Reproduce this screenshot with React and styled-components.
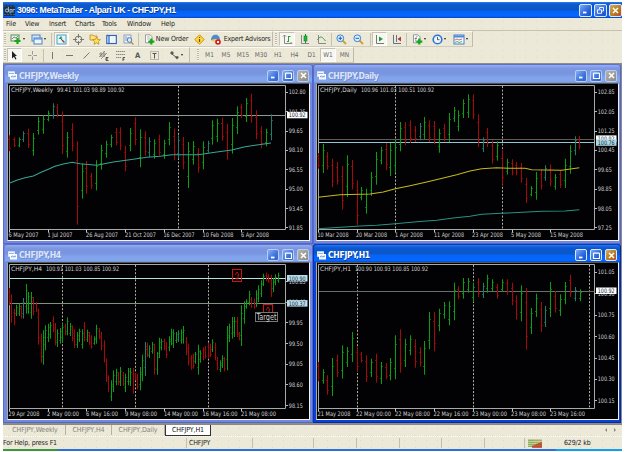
import React from 'react';
import styled, { createGlobalStyle, css } from 'styled-components';

const Global = createGlobalStyle`
  html, body { margin: 0; background: #fff; }
  * { box-sizing: border-box; }
  svg { display: block; flex: none; }
`;

const speckle = css`
  background-color: #ece9d8;
  background-image: radial-gradient(circle, #e6dab4 0.5px, transparent 0.9px);
  background-size: 11px 7px;
`;

const Frame = styled.div`
  width: 619px;
  height: 452px;
  margin-left: 3px;
  padding-top: 2px;
  display: flex;
  flex-direction: column;
  overflow: hidden;
  font-family: 'DejaVu Sans Condensed', 'Noto Sans', sans-serif;
  font-size: 7px;
  color: #222;
  white-space: nowrap;
  cursor: default;
`;

const AppTitle = styled.header`
  flex: none;
  height: 16px;
  display: flex;
  align-items: center;
  padding-left: 1px;
  gap: 2px;
  background: linear-gradient(#2b7fee 0, #0a5bd0 12%, #0c55c4 48%, #0563f5 60%, #0667ff 88%, #0342c0 100%);
`;

const TitleText = styled.h1`
  flex: 1;
  margin: 0;
  font: bold 8.6px 'DejaVu Sans Condensed', 'Noto Sans', sans-serif;
  letter-spacing: ${p => p.$spacing || 0}px;
  color: ${p => (p.$dim ? '#dbe4f8' : '#fff')};
  text-shadow: 0.6px 0.6px 0 ${p => (p.$dim ? '#6f88d0' : '#08348c')};
`;

const AppName = styled(TitleText)`
  font: bold 8.8px 'Liberation Sans', Arial, sans-serif;
`;

const ButtonSet = styled.div`
  display: flex;
  gap: ${p => (p.$large ? 2 : 3)}px;
`;

const buttonTone = {
  blue: 'linear-gradient(135deg, #7ba7f5, #2a66dc 60%, #1c50c0)',
  soft: 'linear-gradient(135deg, #86aef4, #3c73dc 60%, #3263cc)',
  gold: 'linear-gradient(135deg, #d8a860, #b88324 50%, #c44818)',
  grey: 'linear-gradient(135deg, #b4b2aa, #8b8b86)',
};

const CaptionButton = styled.button`
  width: ${p => (p.$large ? 13 : 12)}px;
  height: ${p => (p.$large ? 13 : 12)}px;
  padding: 0;
  display: grid;
  place-items: center;
  border: 1px solid ${p => (p.$tone === 'soft' || p.$tone === 'grey' ? '#b9cdf4' : '#dce8ff')};
  border-radius: 2px;
  background: ${p => buttonTone[p.$tone]};
`;

const MenuBar = styled.nav`
  flex: none;
  height: 13px;
  display: flex;
  align-items: center;
  padding-left: 3px;
  border-bottom: 1px solid #c5c2b2;
  ${speckle}
`;

const MenuItem = styled.span`
  width: ${p => p.$w}px;
  letter-spacing: -0.15px;
`;

const Toolbar = styled.div`
  flex: none;
  height: ${p => p.$h}px;
  display: flex;
  align-items: center;
  ${speckle}
`;

const ToolGroup = styled.div`
  height: ${p => p.$h}px;
  display: flex;
  align-items: center;
  border-top: 1px solid #fbfaf4;
  border-bottom: 1px solid #cfccbc;
  border-right: 1px solid #bebbab;
`;

const Tool = styled.div`
  width: ${p => p.$w}px;
  height: 14px;
  display: flex;
  align-items: center;
  justify-content: center;
  gap: ${p => p.$gap || 1}px;
  color: ${p => p.$ink || '#222'};
  font-size: ${p => p.$size || 7}px;
  letter-spacing: ${p => p.$spacing || 0}px;
  ${p => p.$on && css`
    background: #f7f6f0;
    border: 1px solid #c6c3b4;
    border-right-color: #fff;
    border-bottom-color: #fff;
  `}
`;

const Rule = styled.i`
  width: 1px;
  height: 13px;
  margin: 0 ${p => p.$r ?? 1}px 0 ${p => p.$l ?? 1}px;
  background: #c4c1b1;
`;

const Grip = styled.i`
  width: 2px;
  height: 12px;
  margin: 0 ${p => p.$r ?? 2}px 0 ${p => p.$l ?? 1}px;
  background: repeating-linear-gradient(#bab7a6 0 1px, #f5f3e8 1px 2px);
`;

const Caret = styled.i`
  border: 1.5px solid transparent;
  border-top: 2px solid #222;
  border-bottom: 0;
`;

const Workspace = styled.main`
  flex: none;
  height: 361px;
  display: grid;
  grid-template: 180px 179px / 310px 308px;
  padding-top: 1px;
  background: #8d8d86;
`;

const ChartWindow = styled.section`
  display: flex;
  flex-direction: column;
  padding: 0 3px 3px ${p => (p.$first ? 4 : 3)}px;
  border-radius: 3px 3px 0 0;
  background: ${p => (p.$active ? '#0a43d4' : '#7089df')};
  box-shadow: inset 1px 0 0 ${p => (p.$active ? '#0831bd' : '#5b6bc9')}, inset -1px -1px 0 ${p => (p.$active ? '#0629a8' : '#5365c8')};
`;

const WindowTitle = styled.header`
  flex: none;
  height: ${p => p.$h}px;
  margin: 0 -2px;
  padding: 3px 3px 0 3px;
  display: flex;
  align-items: center;
  gap: 2px;
  border-top: 1px solid ${p => (p.$active ? '#0a3fb8' : '#5d70cd')};
  border-radius: 3px 3px 0 0;
  background: ${p => p.$active
    ? 'linear-gradient(#2375ef 0, #0b58cf 18%, #0c55c6 48%, #0565f8 62%, #0568ff 92%, #0647cd)'
    : 'linear-gradient(#97aff0 0, #7c98e2 18%, #7893df 46%, #80a2ea 66%, #82a6ec 90%, #7590df)'};
`;

const Pane = styled.div`
  width: 303px;
  height: 158px;
  border: 1px solid;
  border-color: #55554f #f4f2ea #f4f2ea #a9a9a0;
  background: #020103;
`;

const ChartTabs = styled.div`
  flex: none;
  height: 12px;
  display: flex;
  align-items: flex-start;
  padding-left: 2px;
  border-top: 1px solid #8b897e;
  color: #85837a;
  ${speckle}
`;

const ChartTab = styled.span`
  width: ${p => p.$w}px;
  height: 10px;
  line-height: 10px;
  text-align: center;
  letter-spacing: -0.1px;
  border-right: 1px solid #b5b2a3;
  ${p => p.$active && css`
    height: 11px;
    background: #fff;
    color: #111;
    border: 1px solid #333;
    border-top: 0;
  `}
`;

const TabArrows = styled.div`
  margin-left: auto;
  padding: 2px 5px 0 0;
  display: flex;
  gap: 5px;
`;

const StatusBar = styled.footer`
  flex: none;
  height: 13px;
  display: flex;
  align-items: center;
  border-top: 1px dotted #fff;
  letter-spacing: -0.15px;
  ${speckle}
`;

const StatusCell = styled.span`
  width: ${p => p.$w}px;
  height: 10px;
  line-height: 10px;
  padding-left: ${p => p.$pad || 0}px;
  display: flex;
  align-items: center;
  border-right: ${p => (p.$last ? 0 : 1)}px solid #c2bfae;
`;

const TaskStrip = styled.div`
  flex: none;
  height: 2px;
  background: linear-gradient(90deg, #3f963f 0 52px, #2f6fdc 58px 552px, #14a0ee 554px);
`;

/* ---------- icons ---------- */

const Svg = ({ w = 11, h = 11, children, ...rest }) => (
  <svg width={w} height={h} viewBox={`0 0 ${w} ${h}`} fill="none" {...rest}>{children}</svg>
);

const Plus = ({ x, y }) => (
  <path d={`M${x - 3} ${y}h6M${x} ${y - 3}v6`} stroke="#16a51c" strokeWidth="2.2" />
);

const icons = {
  newChart: <Svg w={12}><rect x="1" y="1" width="8" height="6" fill="#e9f1df" stroke="#52915a" /><path d="M2 5l2-2 2 1 2-2" stroke="#458" strokeWidth=".7" /><Plus x={7.5} y={7} /></Svg>,
  profiles: <Svg w={12}><rect x="1" y="1" width="8" height="6" fill="#d8e8fb" stroke="#4d83cb" /><rect x="3" y="4" width="8" height="6" fill="#eef6ff" stroke="#4d83cb" /><path d="M3 5h8" stroke="#4d83cb" /></Svg>,
  market: <Svg><rect x="1" y="1" width="9" height="9" fill="#e3f6fb" stroke="#4ba0c4" /><path d="M2.5 5l2.5-3 1.5 2.5z" fill="#18a830" /><path d="M6 6l2.5 2.5" stroke="#d03020" strokeWidth="1.5" /><path d="M4 4l3 3" stroke="#2461b0" /></Svg>,
  target: <Svg><circle cx="5.5" cy="5.5" r="3.4" stroke="#777" /><path d="M5.5 0v4M5.5 7v4M0 5.5h4M7 5.5h4" stroke="#777" /></Svg>,
  folder: <Svg w={12}><path d="M1 1h3l1 1h3v4H1z" fill="#ffe37a" stroke="#b98a1f" strokeWidth=".8" /><path d="M7.5 3l1.2 2.4 2.7.3-2 1.8.6 2.8-2.5-1.4L5 10.3l.6-2.8-2-1.8 2.7-.3z" fill="#ffe05a" stroke="#b8860f" strokeWidth=".7" /></Svg>,
  terminal: <Svg><rect x=".8" y="1.5" width="9.5" height="8" fill="#fff" stroke="#2d66b8" strokeWidth="1.2" /><path d="M3 2v7" stroke="#3f7bd0" strokeWidth="1.5" /><path d="M5 4h4M5 6h4M5 8h3" stroke="#cdd8e8" strokeWidth=".6" /></Svg>,
  tester: <Svg><rect x="1" y="1" width="7" height="8" fill="#f1f5fa" stroke="#7c90ac" strokeWidth=".8" /><path d="M3 2v5M5 3v4" stroke="#5b86c0" strokeWidth=".8" /><circle cx="6.5" cy="6" r="2.3" stroke="#557bb8" fill="#d8ecff" /><path d="M8 8l2.5 2.5" stroke="#c68b25" strokeWidth="1.3" /></Svg>,
  order: <Svg><path d="M1.5 .8h4.5l2 2v6h-6.5z" fill="#fff" stroke="#888" strokeWidth=".8" /><path d="M3 3h3M3 5h3" stroke="#999" strokeWidth=".7" /><Plus x={7.3} y={7.6} /></Svg>,
  info: <Svg><path d="M5.5 .8l4.7 4.7-4.7 4.7L.8 5.5z" fill="#ffd83b" stroke="#c59212" /><path d="M5.5 3v1M5.5 5v3" stroke="#6b4a05" strokeWidth="1.2" /></Svg>,
  expert: <Svg w={12}><path d="M1 6c0-7 9-7 9 0z" fill="#4c8bd6" /><path d="M.5 6.5c3-2 6-2 10 0-3 1.5-7 1.5-10 0z" fill="#f0cf4e" /><path d="M3 7c0 3 5 3 5 0z" fill="#f0d8a0" /><circle cx="8" cy="8" r="2.8" fill="#d81c1c" /><rect x="7" y="7" width="2" height="2" fill="#fff" /></Svg>,
  barChart: <Svg><path d="M2.5 1v8.5H10M1 2.5l1.5-1.5L4 2.5M8.5 8l1.5 1.5" stroke="#888" /><path d="M6.5 2v6M6.5 2.5h2M5 7.5h1.5" stroke="#2c9c38" /></Svg>,
  candle: <Svg><path d="M2.5 1v8.5H10" stroke="#888" /><path d="M6.5 0v9" stroke="#178a28" /><rect x="5" y="2" width="3" height="5" fill="#25b33c" stroke="#128528" strokeWidth=".6" /></Svg>,
  lineChart: <Svg><path d="M2.5 1v8.5H10" stroke="#888" /><path d="M1.5 6c3-5 5-3 8 1" stroke="#3b9747" /></Svg>,
  zoomIn: <Svg><path d="M6.5 6.5L10 10" stroke="#d4a22c" strokeWidth="2" /><circle cx="4.3" cy="4.3" r="3.4" fill="#d9efff" stroke="#3f83d2" /><path d="M2.5 4.3h3.6M4.3 2.5v3.6" stroke="#245cb4" /></Svg>,
  zoomOut: <Svg><path d="M6.5 6.5L10 10" stroke="#d4a22c" strokeWidth="2" /><circle cx="4.3" cy="4.3" r="3.4" fill="#d9efff" stroke="#3f83d2" /><path d="M2.5 4.3h3.6" stroke="#245cb4" /></Svg>,
  scroll: <Svg><path d="M2.5 1v8.5H10" stroke="#777" /><path d="M5 2.5l4 2.5-4 2.5z" fill="#1b9c36" /></Svg>,
  shift: <Svg><path d="M2.5 1v8.5H10M5.5 1v7" stroke="#66738c" /><path d="M10 2.5L6.5 5 10 7.5z" fill="#b73a32" /></Svg>,
  indicators: <Svg><path d="M1.5 .8h4.5l2 2v6h-6.5z" fill="#fff" stroke="#788" strokeWidth=".8" /><path d="M5.5 2.5c-2-.5-1.5 2-2 5M2.5 4.5h2.5" stroke="#667" strokeWidth=".7" /><Plus x={7.3} y={7.6} /></Svg>,
  clock: <Svg><circle cx="5.5" cy="5.5" r="4.3" fill="#eef7ff" stroke="#2e74d2" strokeWidth="1.6" /><path d="M5.5 3v2.7h2" stroke="#333" strokeWidth=".8" /></Svg>,
  template: <Svg w={12}><rect x="1" y="1" width="10" height="9" fill="#f4faff" stroke="#4a7fc8" /><path d="M1 2.5h10" stroke="#4a8be0" strokeWidth="2" /><path d="M2 6l2-1 2 1 3-1" stroke="#c44" strokeWidth=".8" /><path d="M2 8.5l2-1 2 1 3-1" stroke="#393" strokeWidth=".8" /></Svg>,
  pointer: <Svg><path d="M3 1l5 5H6l1.5 3-1.2.6L5 6.8 3 8.5z" fill="#222" /></Svg>,
  cross: <Svg><path d="M5.5 1v3.5M5.5 6.5V10M1 5.5h3.5M6.5 5.5H10" stroke="#999" /></Svg>,
  vline: <Svg><path d="M5.5 2v7" stroke="#777" /></Svg>,
  hline: <Svg><path d="M2 5.5h7" stroke="#777" /></Svg>,
  slash: <Svg><path d="M2.5 8.5l6-6" stroke="#777" /></Svg>,
  channel: <Svg><path d="M1 7l6-6M3 9l6-6M1 4h7M2 6h5M3 2v5M6 1v6" stroke="#777" strokeWidth=".7" /><path d="M10.5 7.5H8v3h2.5M8 9h2" stroke="#333" strokeWidth=".8" /></Svg>,
  fibo: <Svg><path d="M1 1.5h9M1 4.5h9M1 7.5h5" stroke="#888" strokeDasharray="1.5 .5" /><path d="M10 7.5H8v3.5M8 9.2h1.5" stroke="#333" strokeWidth=".8" /></Svg>,
  label: <Svg><rect x="1.5" y="1.5" width="8" height="8" stroke="#888" strokeDasharray="1 1" /><path d="M3.5 3.5h4M5.5 3.5V8.5" stroke="#555" /></Svg>,
  arrows: <Svg><path d="M1 3l2-2 2 2-2 2zM6 7l2-1 2 1-2 2.5z" fill="#555" /><path d="M3 4l5 4" stroke="#555" /></Svg>,
  chartFile: <Svg w={9} h={9}><rect x=".5" y=".8" width="6" height="4.5" fill="#fff" stroke="#d8e7ff" /><rect x="2.5" y="3.5" width="6" height="4.5" fill="#e8f2ff" stroke="#fff" /><path d="M3 6l1.5-1 1 1L8 5" stroke="#4a74c8" strokeWidth=".7" /><path d="M1 2.5h5" stroke="#6d91d8" strokeWidth=".7" /></Svg>,
};

const Logo = () => (
  <Svg w={11} h={11}>
    <rect width="11" height="11" fill="#173150" />
    <circle cx="3" cy="5.5" r="1.6" stroke="#c8d7e8" strokeWidth=".8" />
    <path d="M4.5 2v5M6 4v4.5M6 4.5h2v2.5H6M9 4v3.5M9 4.5h2" stroke="#a9bfd8" strokeWidth=".8" />
    <path d="M0 1h11M0 9.5h11" stroke="#4d7196" strokeWidth=".7" strokeDasharray="2 1" />
  </Svg>
);

const Glyph = ({ kind }) => (
  <Svg w={9} h={9} stroke="#fff">
    {kind === 'min' && <path d="M2 6.5h3.5" strokeWidth="1.8" />}
    {kind === 'max' && <path d="M1.5 2.2h6M1.5 2v5.5h6V2" strokeWidth="1.2" />}
    {kind === 'restore' && <path d="M3.5 3V1.5h4v3.5H6M1.5 3.8h4v3.5h-4z" strokeWidth=".9" />}
    {kind === 'close' && <path d="M2 2l5 5M7 2L2 7" strokeWidth="1.5" />}
  </Svg>
);

const Caption = ({ kinds, tones, large }) => (
  <ButtonSet $large={large}>
    {kinds.map((k, i) => (
      <CaptionButton key={k} $tone={tones[i]} $large={large} aria-label={k}><Glyph kind={k} /></CaptionButton>
    ))}
  </ButtonSet>
);

/* ---------- price data: "x high low colour", three units to a pixel ---------- */

const parse = (origin, text) =>
  text.trim().split(/\s*;\s*/).map(s => {
    const [x, hi, lo, c] = s.trim().split(' ');
    return { x: origin[0] + x / 3, hi: origin[1] + hi / 3, lo: origin[1] + lo / 3, c };
  });

const line = (...parts) =>
  parts.flatMap(([ox, oy, pts]) => pts.split(' ').map(p => {
    const [x, y] = p.split(',');
    return `${(ox + x / 3).toFixed(1)},${(oy + y / 3).toFixed(1)}`;
  })).join(' ');

const weekly = [
  ...parse([0, 62], '28 220 268 r;43 226 255 r;57 226 256 g;71 208 240 t;86 200 258 r;100 213 281 g;115 165 218 g;130 160 215 g;145 146 178 g;159 124 170 t;173 126 166 r;187 148 276 r;203 210 287 g;217 184 268 r;232 238 488 r;246 305 410 g;260 297 395 r;274 333 380 r;289 295 385 g;304 248 323 g;319 236 287 g;333 218 256 g;348 198 250 r;362 196 265 r;376 252 328 r;391 198 268 g;407 166 250 r;421 202 316 g;435 208 282 r;449 226 286 t;463 232 290 g'),
  ...parse([155, 62], '13 218 283 r;28 233 290 g;43 180 250 g;57 200 295 r;71 220 290 t;86 225 322 r;100 240 378 g;115 237 308 g;130 258 332 r;145 238 322 g;159 236 272 t;173 175 248 g;187 170 240 g;202 167 236 r;217 185 293 r;232 168 275 g;246 133 216 g;260 127 168 r;274 108 180 g;289 95 182 r;304 145 232 r;319 192 258 r;334 200 253 g;348 157 235 t'),
];

const daily = [
  ...parse([310, 62], '25 273 320 r;39 246 333 g;53 270 323 r;68 290 376 r;82 300 368 r;97 312 443 r;112 280 405 g;127 294 382 r;141 355 490 r;154 375 415 g;169 380 455 g;184 330 402 g;199 270 368 g;213 254 307 g;228 243 325 r;242 243 342 g;256 235 333 g;271 180 268 g;286 180 250 r;301 175 243 r;316 192 240 r;330 183 235 t;344 165 233 g;359 175 240 r;374 177 246 r;388 200 272 g;403 185 238 r;418 153 240 g;432 135 180 g;446 145 208 g;460 112 168 g'),
  ...parse([465, 62], '10 97 168 g;25 97 172 r;40 157 255 r;54 226 270 t;68 198 255 r;82 235 305 r;97 238 296 g;112 265 368 r;127 290 338 g;141 292 340 r;155 300 340 r;169 303 362 r;184 348 423 r;199 373 403 g;214 330 413 g;228 322 383 r;242 310 356 t;256 307 373 r;271 336 383 g;286 325 378 r;301 290 378 g;316 250 335 g;330 223 280 t;343 222 262 r'),
];

const fourHour = [
  ...parse([0, 242], '28 138 190 r;35 157 242 r;43 200 250 r;50 188 222 g;57 185 222 g;64 190 230 r;71 168 230 t;79 126 215 g;86 150 215 g;93 150 230 g;100 165 220 r;108 180 210 r;115 200 308 r;123 275 362 r;130 265 368 g;137 250 325 g;145 245 300 g;152 240 290 g;159 223 270 r;166 243 310 r;173 262 315 g;180 258 305 g;187 243 300 g;195 245 280 r;202 226 280 g;210 243 282 g;217 250 298 r;224 262 318 r;231 270 318 g;239 260 300 g;246 262 320 g;254 240 298 r;261 263 300 g;268 270 308 r;275 280 320 r;283 283 308 g;290 248 305 g;297 258 292 r;304 270 325 r;312 295 362 r;319 350 420 r;326 400 450 r;333 415 477 g;340 385 450 g;348 380 430 g;355 390 430 r;362 375 432 g;369 390 432 r;377 395 450 g;384 378 430 g;391 378 432 g;399 378 455 r;406 392 415 r;413 395 442 r;421 375 445 g;428 338 418 g;435 300 402 t;442 302 345 r;449 310 348 g;456 300 335 g;464 305 398 r'),
  ...parse([155, 242], '6 330 398 g;13 287 348 g;20 290 325 g;27 290 325 r;34 300 348 r;42 283 328 g;49 260 310 g;56 262 318 g;63 270 303 g;71 265 300 t;79 262 305 g;86 252 305 g;93 285 340 r;100 305 370 r;108 340 383 r;115 335 380 r;122 330 365 g;130 308 398 g;137 325 362 g;144 316 355 r;151 312 350 r;159 303 350 r;166 305 345 r;173 292 330 g;181 302 355 r;188 345 385 r;195 355 390 g;202 340 378 g;209 345 388 r;217 252 385 g;224 245 300 g;231 225 290 g;238 225 285 g;246 225 285 r;253 270 295 r;260 190 312 g;268 178 245 g;275 172 200 g;283 146 190 g;290 165 198 r;297 170 200 r;304 145 195 g;311 130 180 g;319 115 165 g;326 95 132 g;333 92 118 r;340 97 122 r;348 98 165 r;355 108 150 g;362 97 130 g;370 92 122 g'),
];

const hourly = [
  ...parse([310, 242], '25 360 418 r;39 382 425 g;53 400 458 r;68 348 462 g;82 338 405 r;97 310 410 g;112 315 375 g;127 270 360 g;141 313 388 r;155 330 362 r;169 340 420 r;184 350 405 g;199 335 422 r;214 360 426 g;228 363 412 r;242 348 415 g;257 280 412 g;271 262 392 r;286 290 375 g;301 280 340 g;316 292 377 r;330 316 373 r;344 297 398 g;358 210 322 g;374 210 328 r;388 200 268 g;403 180 230 g;418 178 250 g;432 122 235 g;446 132 172 r;460 108 170 g'),
  ...parse([465, 242], '10 108 152 g;25 122 180 g;40 108 165 r;54 122 168 t;68 98 152 g;82 112 148 g;97 125 170 r;112 112 150 g;127 112 158 r;141 122 190 r;155 160 233 r;169 130 238 g;184 138 323 r;199 198 276 g;214 155 225 g;229 180 270 r;242 192 255 t;257 120 225 g;271 147 212 r;286 157 222 g;301 120 187 g;316 98 165 r;330 135 178 t;345 142 178 g'),
];

const barColour = { g: '#08a012', r: '#a80808', t: '#1f7d6c' };

const Bars = ({ bars, dense }) => bars.map((b, i) => {
  const x = Math.floor(b.x) + 0.5;
  const span = b.lo - b.hi;
  const up = b.c !== 'r';
  const open = Math.round(b.hi + span * (up ? 0.74 : 0.22)) + 0.5;
  const close = Math.round(b.hi + span * (up ? 0.2 : 0.78)) + 0.5;
  const t = dense ? 1.2 : 1.5;
  return (
    <g key={i} stroke={barColour[b.c]}>
      <path d={`M${x} ${b.hi.toFixed(1)}V${b.lo.toFixed(1)}`} />
      <path d={`M${x - t} ${open}H${x}M${x} ${close}H${x + t}`} strokeOpacity="0.7" />
    </g>
  );
});

const Label = ({ x, y, w, children, fill = '#d4d4d4', size = 6.2 }) => (
  <text x={x} y={y} fill={fill} fontSize={size} textLength={w} lengthAdjust="spacingAndGlyphs"
    fontFamily="'DejaVu Sans Condensed', 'Noto Sans', sans-serif">{children}</text>
);

const Chart = ({ left, top, quote, quoteParts, bars, dense, dates, prices, dashes, levels, tags, curves, children }) => {
  const px = left + 1;
  const right = left + 277.5;
  const bottom = top + 145.5;
  return (
    <svg width="301" height="156" viewBox={`${left} ${top} 301 156`} fill="none">
      <path d={`M${px + 0.5} ${top + 1.5}H${right}V${bottom}H${px + 0.5}z`} stroke="#a4aaa8" />
      {dashes.map(x => <path key={x} d={`M${Math.floor(x) + 0.5} ${top + 2}V${bottom}`} stroke="#b5aca0" strokeDasharray="2 1.6" />)}
      {levels.map(([y, c]) => <path key={y} d={`M${px + 1} ${Math.floor(y) + 0.5}H${right}`} stroke={c} />)}
      <Bars bars={bars} dense={dense} />
      {curves && curves.map(([pts, c]) => <polyline key={c} points={pts} stroke={c} strokeWidth="1.1" />)}
      <Label x={left + 3} y={top + 8.3} w={quoteParts[0]}>{quote[0]}</Label>
      <Label x={left + 3 + quoteParts[1]} y={top + 8.3} w={quoteParts[2]}>{quote[1]}</Label>
      {dates.map(([x, w, s], i) => (
        <g key={s}>
          <path d={`M${px + 0.5 + Math.round(i * 38.7)} ${bottom}v3`} stroke="#c6c6c6" />
          <Label x={x} y={top + 152.8} w={w}>{s}</Label>
        </g>
      ))}
      {prices.map(([y, s]) => (
        <g key={s}>
          <path d={`M${right} ${Math.floor(y) + 0.5}h2.5`} stroke="#b8b8b8" />
          <Label x={right + 3.3} y={y + 2.3} w={s.length > 5 ? 16.8 : 14}>{s}</Label>
        </g>
      ))}
      {tags.map(([y, s, c]) => (
        <g key={s}>
          <rect x={right + 1.5} y={y - 3.2} width="20.5" height="6.5" fill={c} />
          <Label x={right + 3.3} y={y + 2.3} w={16.8} fill="#123">{s}</Label>
        </g>
      ))}
      {children}
    </svg>
  );
};

const SignalMark = ({ x, y }) => (
  <g stroke="#d01212">
    <rect x={x + 0.5} y={y + 0.5} width="9" height="12" />
    <path d={`M${x + 3} ${y + 6}l2-3 2 3h-1v4h-2v-1.5`} strokeWidth=".9" />
  </g>
);

const rowsTop = [92, 111.3, 131, 150, 169.6, 189, 208.3, 227.6];
const pair = (ys, labels) => ys.map((y, i) => [y, labels[i]]);

const windows = [
  { title: 'CHFJPY,Weekly', spacing: -0.38, first: true, chart: (
    <Chart left={8} top={84} bars={weekly}
      quote={['CHFJPY,Weekly', '99.41 101.03 98.89 100.92']} quoteParts={[42, 46, 67.5]}
      dashes={[178.7]} levels={[[115.3, '#8a9a98']]} tags={[[115, '100.92', '#fff']]}
      curves={[[line([0, 62, '28,364 50,355 75,347 100,342 125,330 145,322 165,313 190,306 217,301 240,305 290,310 340,300 400,292 440,286 480,283'], [155, 62, '50,278 130,278 180,271 230,264 270,254 300,250 348,243']), '#35a595']]}
      prices={pair(rowsTop, ['102.80', '101.25', '99.65', '98.10', '96.55', '95.00', '93.45', '91.85'])}
      dates={[[8.5, 30, '6 May 2007'], [47.5, 25, '1 Jul 2007'], [86, 32, '26 Aug 2007'], [125, 31, '21 Oct 2007'], [163.5, 31, '16 Dec 2007'], [202.5, 31, '10 Feb 2008'], [241, 28, '6 Apr 2008']]} />
  ) },
  { title: 'CHFJPY,Daily', spacing: -0.38, chart: (
    <Chart left={317} top={84} bars={daily}
      quote={['CHFJPY,Daily', '100.96 101.03 100.51 100.92']} quoteParts={[37, 41, 73]}
      dashes={[395.3, 502.3]} levels={[[139, '#5d5d58'], [142.3, '#8cc8d4']]}
      tags={[[138.6, '100.92', '#fff'], [142.5, '100.76', '#a9dbe6']]}
      curves={[
        [line([310, 62, '24,406 90,398 180,396 220,390 256,380 300,371 350,360 400,348 440,338 480,327'], [465, 62, '50,320 95,317 130,319 180,319 200,323 290,325 343,317']), '#c4b91c'],
        [line([310, 62, '24,500 150,492 200,490 256,485 320,479 380,475 430,468 480,463'], [465, 62, '50,457 110,454 230,448 300,447 343,443']), '#299283'],
      ]}
      prices={pair(rowsTop, ['102.85', '102.05', '101.25', '100.45', '99.65', '98.85', '98.05', '97.25'])}
      dates={[[317.5, 31, '10 Mar 2008'], [356, 31, '20 Mar 2008'], [395, 28, '1 Apr 2008'], [434, 30, '11 Apr 2008'], [472, 31, '23 Apr 2008'], [511, 30, '5 May 2008'], [550, 33, '15 May 2008']]} />
  ) },
  { title: 'CHFJPY,H4', spacing: -0.35, first: true, low: true, chart: (
    <Chart left={8} top={263} bars={fourHour} dense
      quote={['CHFJPY,H4', '100.91 101.03 100.85 100.92']} quoteParts={[31, 35, 73]}
      dashes={[62.3, 135.7, 208]} levels={[[278.7, '#b4e2dc'], [303.3, '#7d9480']]}
      tags={[[278.2, '100.90', '#b8dcec'], [303.3, '100.37', '#b8dcec']]}
      prices={[[281.5, '100.85'], [302, '100.40'], [322.7, '99.95'], [343.3, '99.50'], [364, '99.05'], [384.7, '98.60'], [405.3, '98.15']]}
      dates={[[8.5, 31, '29 Apr 2008'], [47, 32, '2 May 00:00'], [86, 32, '6 May 16:00'], [125, 32, '9 May 08:00'], [164, 34, '14 May 00:00'], [202.5, 35, '16 May 16:00'], [241, 35, '21 May 08:00']]}>
      <SignalMark x={232} y={269} />
      <SignalMark x={263} y={304} />
      <rect x="255.5" y="312.5" width="22" height="9" fill="#020103" stroke="#777" />
      <Label x={256.5} y={320.2} w={20} size={8}>Target</Label>
    </Chart>
  ) },
  { title: 'CHFJPY,H1', spacing: -0.35, low: true, active: true, chart: (
    <Chart left={317} top={263} bars={hourly}
      quote={['CHFJPY,H1', '100.90 100.93 100.85 100.92']} quoteParts={[31, 35, 73]}
      dashes={[357, 473.3, 589.3]} levels={[[291.3, '#66706a']]} tags={[[290.7, '100.92', '#fff']]}
      prices={[[272, '101.05'], [293.6, '100.90'], [315, '100.75'], [336.7, '100.60'], [358, '100.45'], [379, '100.30'], [400.7, '100.15']]}
      dates={[[317.5, 33, '21 May 2008'], [356, 35, '22 May 00:00'], [395, 35, '22 May 08:00'], [433.5, 35, '22 May 16:00'], [472, 35, '23 May 00:00'], [511, 35, '23 May 08:00'], [550, 35, '23 May 16:00']]} />
  ) },
];

const menu = [['File', 19], ['View', 24], ['Insert', 26], ['Charts', 27], ['Tools', 25], ['Window', 34], ['Help', 20]];
const periods = [['M1', 17], ['M5', 16], ['M15', 18], ['M30', 18], ['H1', 16], ['H4', 17], ['D1', 17], ['W1', 16, true], ['MN', 17]];

const Signal = () => (
  <Svg w={15} h={9}>
    {[0, 2, 4, 6, 8, 10, 12].map((x, i) => (
      <React.Fragment key={x}>
        <path d={`M${x + 1} 0.5v8`} stroke={i < 3 ? '#6d9a28' : '#8a9a30'} strokeWidth="1.4" strokeDasharray="1.5 .5" />
        {i > 1 && <path d={`M${x + 1} ${8 - i * 0.8}V9`} stroke="#bb2c1c" strokeWidth="1.4" />}
      </React.Fragment>
    ))}
  </Svg>
);

export default function App() {
  return (
    <>
      <Global />
      <Frame>
        <AppTitle>
          <Logo />
          <AppName $spacing={-0.4}>3096: MetaTrader - Alpari UK - CHFJPY,H1</AppName>
          <Caption large kinds={['min', 'restore', 'close']} tones={['blue', 'blue', 'gold']} />
        </AppTitle>

        <MenuBar>{menu.map(([s, w]) => <MenuItem key={s} $w={w}>{s}</MenuItem>)}</MenuBar>

        <Toolbar $h={16}>
          <ToolGroup $h={16}>
            <Grip />
            <Tool $w={18}>{icons.newChart}<Caret /></Tool>
            <Tool $w={24}>{icons.profiles}<Caret /></Tool>
            <Rule $l={1} $r={2} />
            <Tool $w={15} $on>{icons.market}</Tool>
            <Tool $w={18}>{icons.target}</Tool>
            <Tool $w={15}>{icons.folder}</Tool>
            <Tool $w={19}>{icons.terminal}</Tool>
            <Tool $w={15}>{icons.tester}</Tool>
            <Rule $l={2} $r={3} />
            <Tool $w={48} $spacing={-0.15}>{icons.order}New Order</Tool>
            <Tool $w={18}>{icons.info}</Tool>
            <Tool $w={64} $spacing={-0.17} $gap={2}>{icons.expert}Expert Advisors</Tool>
          </ToolGroup>
          <ToolGroup $h={16}>
            <Grip $l={2} $r={2} />
            <Tool $w={16} $on>{icons.barChart}</Tool>
            <Tool $w={18}>{icons.candle}</Tool>
            <Tool $w={17}>{icons.lineChart}</Tool>
            <Rule $l={1} $r={1} />
            <Tool $w={17}>{icons.zoomIn}</Tool>
            <Tool $w={17}>{icons.zoomOut}</Tool>
            <Rule $l={3} $r={1} />
            <Tool $w={15} $on>{icons.scroll}</Tool>
            <Tool $w={18}>{icons.shift}</Tool>
            <Rule $l={1} $r={1} />
            <Tool $w={21}>{icons.indicators}<Caret /></Tool>
            <Tool $w={20}>{icons.clock}<Caret /></Tool>
            <Tool $w={23}>{icons.template}<Caret /></Tool>
          </ToolGroup>
        </Toolbar>

        <Toolbar $h={16}>
          <ToolGroup $h={16}>
            <Grip $r={1} />
            <Tool $w={15} $on>{icons.pointer}</Tool>
            <Tool $w={20}>{icons.cross}</Tool>
            <Rule $l={1} $r={0} />
            <Tool $w={17}>{icons.vline}</Tool>
            <Tool $w={17}>{icons.hline}</Tool>
            <Tool $w={17}>{icons.slash}</Tool>
            <Tool $w={17}>{icons.channel}</Tool>
            <Tool $w={17}>{icons.fibo}</Tool>
            <Tool $w={17} $size={7.5} $ink="#555"><b>A</b></Tool>
            <Tool $w={16}>{icons.label}</Tool>
            <Tool $w={27}>{icons.arrows}<Caret /></Tool>
          </ToolGroup>
          <ToolGroup $h={16}>
            <Grip $l={7} $r={2} />
            {periods.map(([s, w, on]) => <Tool key={s} $w={w} $on={on} $ink="#666" $size={6.5}>{s}</Tool>)}
          </ToolGroup>
        </Toolbar>

        <Workspace>
          {windows.map(w => (
            <ChartWindow key={w.title} $first={w.first} $active={w.active}>
              <WindowTitle $h={w.low ? 18 : 19} $active={w.active}>
                {icons.chartFile}
                <TitleText $dim={!w.active} $spacing={w.spacing}>{w.title}</TitleText>
                <Caption kinds={['min', 'max', 'close']}
                  tones={w.active ? ['blue', 'blue', 'gold'] : ['soft', 'soft', 'grey']} />
              </WindowTitle>
              <Pane>{w.chart}</Pane>
            </ChartWindow>
          ))}
        </Workspace>

        <ChartTabs>
          <ChartTab $w={61}>CHFJPY,Weekly</ChartTab>
          <ChartTab $w={46}>CHFJPY,H4</ChartTab>
          <ChartTab $w={53}>CHFJPY,Daily</ChartTab>
          <ChartTab $w={46} $active>CHFJPY,H1</ChartTab>
          <TabArrows>
            <Svg w={4} h={6}><path d="M3 1L1 3l2 2z" fill="#888" /></Svg>
            <Svg w={4} h={6}><path d="M1 1l2 2-2 2z" fill="#888" /></Svg>
          </TabArrows>
        </ChartTabs>

        <StatusBar>
          <StatusCell $w={184}>For Help, press F1</StatusCell>
          <StatusCell $w={66} $pad={2}>CHFJPY</StatusCell>
          {[61, 43, 43, 42, 43, 40].map((w, i) => <StatusCell key={i} $w={w} />)}
          <StatusCell $w={97} $pad={3} $last><Signal /><StatusCell $w={60} $pad={21} $last>629/2 kb</StatusCell></StatusCell>
        </StatusBar>
        <TaskStrip />
      </Frame>
    </>
  );
}
